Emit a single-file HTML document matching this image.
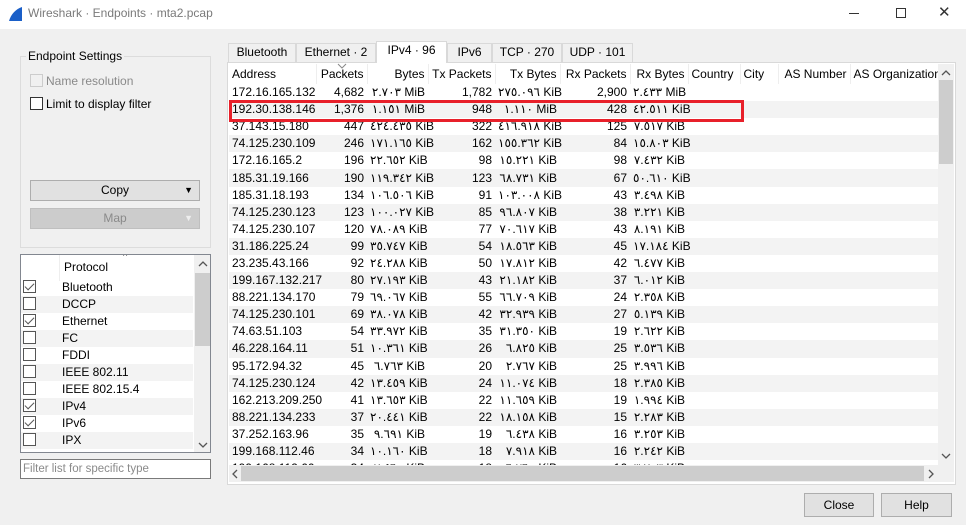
<!DOCTYPE html>
<html><head><meta charset="utf-8"><style>
*{box-sizing:border-box;margin:0;padding:0}
body{width:966px;height:525px;background:#f0f0f0;font-family:"Liberation Sans","DejaVu Sans",sans-serif;font-size:12px;color:#000;position:relative;overflow:hidden}
.abs{position:absolute}
.title{left:0;top:0;width:966px;height:29px;background:#fff}
.btn{border:1px solid #adadad;background:#e1e1e1;text-align:center;line-height:19px}
.tab{top:43px;height:19px;border:1px solid #d9d9d9;border-bottom:none;background:#f0f0f0;text-align:center;line-height:17px}
table{border-collapse:collapse;font-family:"Liberation Sans","DejaVu Sans",sans-serif;font-size:12px}
td{height:17.1px;padding:0 3px;white-space:nowrap;line-height:17px}
tr:nth-child(even) td{background:#f3f3f3}
.r{text-align:right}
.cb{position:absolute;left:23px;width:13px;height:13px;border:1px solid #333;background:#fff}
.ck::after{content:"";position:absolute;left:3px;top:0px;width:4px;height:8px;border:solid #555;border-width:0 1.5px 1.5px 0;transform:rotate(45deg)}
.pl{position:absolute;left:62px}
</style></head><body>
<div class="abs title">
<svg class="abs" style="left:7px;top:6px" width="16" height="16"><path d="M2 15 C4 8 9 3 15 1 L15 15 Z" fill="#1a5fc8"/></svg>
<div class="abs" style="left:28px;top:6px;color:#7a7a7a;font-size:12px">Wireshark · Endpoints · mta2.pcap</div>
<div class="abs" style="left:849px;top:13px;width:10px;height:1px;background:#333"></div>
<div class="abs" style="left:896px;top:8px;width:10px;height:10px;border:1px solid #333"></div>
<div class="abs" style="left:938px;top:3px;font-size:15px;color:#333">✕</div>
</div>

<div class="abs" style="left:20px;top:56px;width:191px;height:192px;border:1px solid #dcdcdc"></div>
<div class="abs" style="left:26px;top:49px;background:#f0f0f0;padding:0 2px">Endpoint Settings</div>
<div class="abs" style="left:30px;top:74px;width:13px;height:13px;border:1px solid #ccc;background:#f0f0f0"></div>
<div class="abs" style="left:46px;top:74px;color:#8a8a8a">Name resolution</div>
<div class="abs" style="left:30px;top:97px;width:13px;height:13px;border:1px solid #333;background:#fff"></div>
<div class="abs" style="left:46px;top:97px">Limit to display filter</div>
<div class="abs btn" style="left:30px;top:180px;width:170px;height:21px">Copy<span style="position:absolute;right:6px;top:0;font-size:9px">▼</span></div>
<div class="abs btn" style="left:30px;top:208px;width:170px;height:21px;background:#ccc;border-color:#bfbfbf;color:#8a8a8a">Map<span style="position:absolute;right:6px;top:0;font-size:9px;color:#eee">▼</span></div>

<div class="abs" style="left:20px;top:254px;width:191px;height:199px;border:1px solid #828790;background:#fff;overflow:hidden">
<div class="abs" style="left:38px;top:0;width:135px;height:26px;border-left:1px solid #eee;padding:5px 0 0 4px">Protocol</div>
<div class="abs" style="left:102px;top:-4px;font-size:9px;color:#666">^</div>
<div class="abs" style="left:173px;top:0;width:17px;height:199px;background:#f0f0f0"></div>
<div class="abs" style="left:174px;top:18px;width:15px;height:73px;background:#cdcdcd"></div>
<svg class="abs" style="left:177px;top:5px" width="10" height="8"><path d="M1 6 L5 2 L9 6" fill="none" stroke="#555" stroke-width="1.3"/></svg>
<svg class="abs" style="left:177px;top:186px" width="10" height="8"><path d="M1 2 L5 6 L9 2" fill="none" stroke="#555" stroke-width="1.3"/></svg>
</div>
<div id="pl"></div>
<div class="abs" style="left:20px;top:459px;width:191px;height:20px;border:1px solid #7a7a7a;background:#fff;color:#8a8a8a;padding:3px 2px;font-size:11.5px">Filter list for specific type</div>

<div class="abs tab" style="left:228px;width:68px">Bluetooth</div>
<div class="abs tab" style="left:296px;width:80px">Ethernet · 2</div>
<div class="abs tab" style="left:447px;width:45px">IPv6</div>
<div class="abs tab" style="left:492px;width:70px">TCP · 270</div>
<div class="abs tab" style="left:562px;width:71px">UDP · 101</div>
<div class="abs" style="left:227px;top:62px;width:729px;height:423px;border:1px solid #d9d9d9;background:#fff"></div>
<div class="abs tab" style="left:376px;top:41px;width:71px;height:22px;background:#fff;z-index:2">IPv4 · 96</div>

<div class="abs" style="left:229px;top:64px;width:709px;height:401px;overflow:hidden;background:#fff">
<table style="width:709px;table-layout:fixed" id="t">
<colgroup><col style="width:87px"><col style="width:51px"><col style="width:61px"><col style="width:67px"><col style="width:65px"><col style="width:70px"><col style="width:58px"><col style="width:52px"><col style="width:38px"><col style="width:72px"><col style="width:88px"></colgroup>
<tr style="height:20px"><td style="height:20px;border-right:1px solid #eee">Address</td><td class="r" style="border-right:1px solid #eee">Packets</td><td class="r" style="border-right:1px solid #eee">Bytes</td><td class="r" style="border-right:1px solid #eee">Tx Packets</td><td class="r" style="border-right:1px solid #eee">Tx Bytes</td><td class="r" style="border-right:1px solid #eee">Rx Packets</td><td class="r" style="border-right:1px solid #eee">Rx Bytes</td><td style="border-right:1px solid #eee">Country</td><td style="border-right:1px solid #eee">City</td><td class="r" style="border-right:1px solid #eee">AS Number</td><td>AS Organization</td></tr>
</table></div>
<svg class="abs" style="left:337px;top:63px" width="10" height="6"><path d="M1 1 L5 5 L9 1" fill="none" stroke="#888" stroke-width="1"/></svg>
<div class="abs" style="left:229px;top:100px;width:515px;height:22px;border:3px solid #e8202a"></div>
<div class="abs" style="left:938px;top:64px;width:16px;height:401px;background:#f0f0f0"></div>
<div class="abs" style="left:939px;top:80px;width:14px;height:84px;background:#cdcdcd"></div>
<svg class="abs" style="left:941px;top:69px" width="10" height="8"><path d="M1 6 L5 2 L9 6" fill="none" stroke="#555" stroke-width="1.3"/></svg>
<svg class="abs" style="left:941px;top:452px" width="10" height="8"><path d="M1 2 L5 6 L9 2" fill="none" stroke="#555" stroke-width="1.3"/></svg>
<div class="abs" style="left:229px;top:465px;width:709px;height:17px;background:#f0f0f0"></div>
<div class="abs" style="left:241px;top:466px;width:683px;height:15px;background:#cdcdcd"></div>
<svg class="abs" style="left:231px;top:469px" width="8" height="10"><path d="M6 1 L2 5 L6 9" fill="none" stroke="#555" stroke-width="1.3"/></svg>
<svg class="abs" style="left:927px;top:469px" width="8" height="10"><path d="M2 1 L6 5 L2 9" fill="none" stroke="#555" stroke-width="1.3"/></svg>
<div class="abs" style="left:938px;top:465px;width:16px;height:17px;background:#f0f0f0"></div>

<div class="abs btn" style="left:804px;top:493px;width:70px;height:24px;line-height:22px">Close</div>
<div class="abs btn" style="left:881px;top:493px;width:71px;height:24px;line-height:22px">Help</div>

<script>
var d=[
["172.16.165.132","4,682","٢.٧٠٣ MiB","1,782","٢٧٥.٠٩٦ KiB","2,900","٢.٤٣٣ MiB"],
["192.30.138.146","1,376","١.١٥١ MiB","948","١.١١٠ MiB","428","٤٢.٥١١ KiB"],
["37.143.15.180","447","٤٢٤.٤٣٥ KiB","322","٤١٦.٩١٨ KiB","125","٧.٥١٧ KiB"],
["74.125.230.109","246","١٧١.١٦٥ KiB","162","١٥٥.٣٦٢ KiB","84","١٥.٨٠٣ KiB"],
["172.16.165.2","196","٢٢.٦٥٢ KiB","98","١٥.٢٢١ KiB","98","٧.٤٣٢ KiB"],
["185.31.19.166","190","١١٩.٣٤٢ KiB","123","٦٨.٧٣١ KiB","67","٥٠.٦١٠ KiB"],
["185.31.18.193","134","١٠٦.٥٠٦ KiB","91","١٠٣.٠٠٨ KiB","43","٣.٤٩٨ KiB"],
["74.125.230.123","123","١٠٠.٠٢٧ KiB","85","٩٦.٨٠٧ KiB","38","٣.٢٢١ KiB"],
["74.125.230.107","120","٧٨.٠٨٩ KiB","77","٧٠.٦١٧ KiB","43","٨.١٩١ KiB"],
["31.186.225.24","99","٣٥.٧٤٧ KiB","54","١٨.٥٦٣ KiB","45","١٧.١٨٤ KiB"],
["23.235.43.166","92","٢٤.٢٨٨ KiB","50","١٧.٨١٢ KiB","42","٦.٤٧٧ KiB"],
["199.167.132.217","80","٢٧.١٩٣ KiB","43","٢١.١٨٢ KiB","37","٦.٠١٢ KiB"],
["88.221.134.170","79","٦٩.٠٦٧ KiB","55","٦٦.٧٠٩ KiB","24","٢.٣٥٨ KiB"],
["74.125.230.101","69","٣٨.٠٧٨ KiB","42","٣٢.٩٣٩ KiB","27","٥.١٣٩ KiB"],
["74.63.51.103","54","٣٣.٩٧٢ KiB","35","٣١.٣٥٠ KiB","19","٢.٦٢٢ KiB"],
["46.228.164.11","51","١٠.٣٦١ KiB","26","٦.٨٢٥ KiB","25","٣.٥٣٦ KiB"],
["95.172.94.32","45","٦.٧٦٣ KiB","20","٢.٧٦٧ KiB","25","٣.٩٩٦ KiB"],
["74.125.230.124","42","١٣.٤٥٩ KiB","24","١١.٠٧٤ KiB","18","٢.٣٨٥ KiB"],
["162.213.209.250","41","١٣.٦٥٣ KiB","22","١١.٦٥٩ KiB","19","١.٩٩٤ KiB"],
["88.221.134.233","37","٢٠.٤٤١ KiB","22","١٨.١٥٨ KiB","15","٢.٢٨٣ KiB"],
["37.252.163.96","35","٩.٦٩١ KiB","19","٦.٤٣٨ KiB","16","٣.٢٥٣ KiB"],
["199.168.112.46","34","١٠.١٦٠ KiB","18","٧.٩١٨ KiB","16","٢.٢٤٢ KiB"],
["199.168.112.60","34","٧.٤٦٠ KiB","18","٦.٢٦٠ KiB","16","٣.٧٠٣ KiB"]];
var t=document.getElementById('t'),h='';
d.forEach(function(r){h+='<tr><td>'+r[0]+'</td>';for(var i=1;i<7;i++)h+='<td class="r">'+r[i]+'</td>';h+='<td></td><td></td><td></td><td></td></tr>';});
t.insertAdjacentHTML('beforeend',h);
var p=[["Bluetooth",1],["DCCP",0],["Ethernet",1],["FC",0],["FDDI",0],["IEEE 802.11",0],["IEEE 802.15.4",0],["IPv4",1],["IPv6",1],["IPX",0]];
var s='';p.forEach(function(x,i){var y=280+i*17;
if(i%2)s+='<div class="abs" style="left:21px;top:'+(y-1)+'px;width:172px;height:17px;background:#f3f3f3"></div>';
s+='<div class="cb'+(x[1]?' ck':'')+'" style="top:'+y+'px;border-color:#555"></div><div class="pl" style="top:'+(y)+'px">'+x[0]+'</div>';});
document.getElementById('pl').innerHTML=s;
</script>
</body></html>
